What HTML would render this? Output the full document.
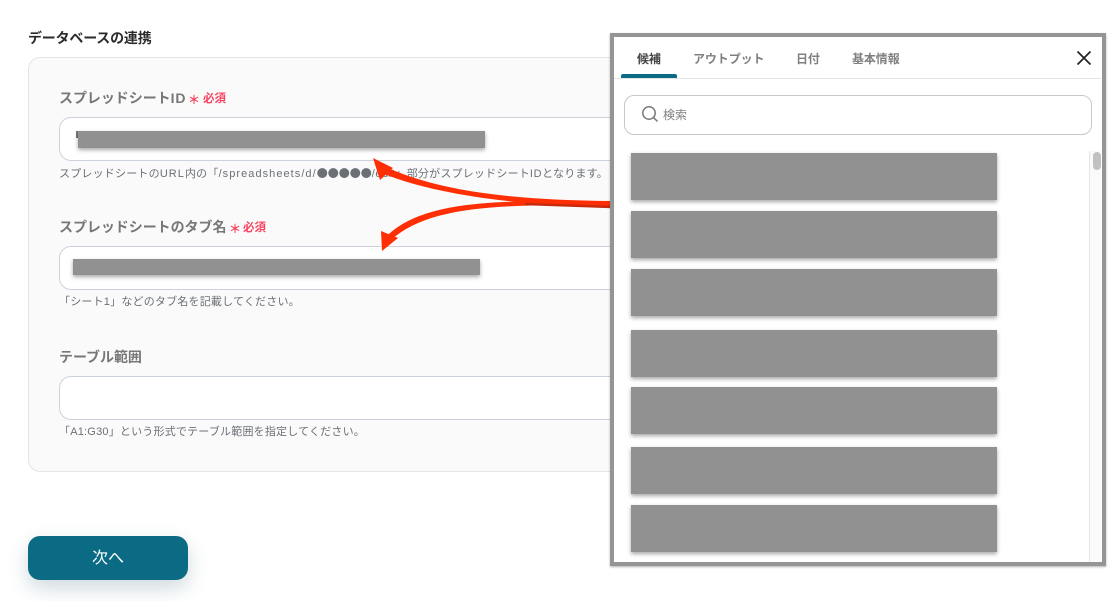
<!DOCTYPE html>
<html lang="ja">
<head>
<meta charset="utf-8">
<style>
html,body{margin:0;padding:0;background:#fff;}
body{width:1117px;height:601px;position:relative;overflow:hidden;font-family:"Liberation Sans","Noto Sans CJK JP",sans-serif;}
.a{position:absolute;white-space:nowrap;}
.card{position:absolute;left:28px;top:57px;width:640px;height:413px;background:#fafafa;border:1px solid #e3e5e8;border-radius:12px;}
.inp{position:absolute;left:59px;width:620px;height:42px;background:#fff;border:1px solid #ccd2dc;border-radius:12px;}
.lab{font-size:14px;font-weight:700;color:#777;line-height:20px;letter-spacing:-.05px;}
.req{font-size:11.5px;font-weight:700;color:#f6425f;line-height:16px;}
.ast{font-size:12px;font-weight:700;color:#f6425f;line-height:16px;font-family:"Noto Sans CJK JP",sans-serif;}
.hint{font-size:11px;color:#6b6f76;line-height:16px;letter-spacing:.2px;}
.l{letter-spacing:1.05px;}
.c{font-family:"Noto Sans CJK JP",sans-serif;letter-spacing:0;color:#6b6f76;}
.bar{position:absolute;background:#919191;box-shadow:0 2px 4px rgba(0,0,0,.35);}
.panel{position:absolute;left:610px;top:33px;width:488px;height:525px;background:#fff;border:4px solid #959595;box-shadow:0 1px 2px rgba(0,0,0,.3);}
.tab{font-size:12px;font-weight:700;color:#808080;line-height:16px;letter-spacing:-.1px;}
</style>
</head>
<body>
<div class="a" style="left:28px;top:29px;font-size:14px;font-weight:700;color:#2b2b2b;line-height:18px;letter-spacing:-.2px;">データベースの連携</div>
<div class="card"></div>

<div class="a lab" style="left:59px;top:88px;">スプレッドシート<span style="letter-spacing:.9px;">ID</span></div>
<div class="a ast" style="left:188px;top:92px;">＊</div>
<div class="a req" style="left:203px;top:91px;">必須</div>
<div class="inp" style="top:117px;"></div>
<div class="a" style="left:76px;top:131px;width:2px;height:7px;background:#777;"></div>
<div class="bar" style="left:78px;top:131px;width:407px;height:17px;"></div>
<div class="a hint" style="left:59px;top:165px;">スプレッドシートの<span class="l">URL</span>内の「<span class="l">/spreadsheets/d/</span><span class="c">●●●●●</span><span style="letter-spacing:.6px;">/edit</span>」部分がスプレッドシート<span style="letter-spacing:.6px;">ID</span>となります。</div>

<div class="a lab" style="left:59px;top:217px;">スプレッドシートのタブ名</div>
<div class="a ast" style="left:229px;top:221px;">＊</div>
<div class="a req" style="left:243px;top:220px;">必須</div>
<div class="inp" style="top:246px;"></div>
<div class="bar" style="left:73px;top:259px;width:407px;height:16px;"></div>
<div class="a hint" style="left:59px;top:294px;">「シート1」などのタブ名を記載してください。</div>

<div class="a lab" style="left:59px;top:347px;">テーブル範囲</div>
<div class="inp" style="top:376px;"></div>
<div class="a hint" style="left:59px;top:424px;">「A1:G30」という形式でテーブル範囲を指定してください。</div>

<div class="a" style="left:28px;top:536px;width:160px;height:44px;background:#0b6a84;border-radius:12px;box-shadow:0 8px 20px rgba(11,70,90,.2);color:#fff;font-size:16px;line-height:45px;text-align:center;">次へ</div>

<svg class="a" style="left:0;top:0;" width="1117" height="601" viewBox="0 0 1117 601">
  <path d="M612 201 C520 200 445 193 388 168 L384 174 C440 196 520 205 612 208 Z" fill="#fe2f05"/>
  <path d="M373 158 L393 168 L380 180 Z" fill="#fe2f05"/>
  <path d="M612 202 C510 200 425 198 387 236 L391 240 C430 204 510 204 612 206 Z" fill="#fe2f05"/>
  <path d="M382 251 L398 238 L381 231 Z" fill="#fe2f05"/>
  <path d="M612 207 C580 206 550 205 525 204" fill="none" stroke="#c92a0c" stroke-width="2.5"/>
</svg>

<div class="panel"></div>
<div class="a tab" style="left:637px;top:51px;color:#444;">候補</div>
<div class="a tab" style="left:693px;top:51px;">アウトプット</div>
<div class="a tab" style="left:796px;top:51px;">日付</div>
<div class="a tab" style="left:852px;top:51px;">基本情報</div>
<div class="a" style="left:621px;top:74px;width:56px;height:4px;background:#0b6a84;border-radius:2px 2px 0 0;"></div>
<div class="a" style="left:614px;top:78px;width:487px;height:1px;background:#e3e5e8;"></div>
<svg class="a" style="left:1076px;top:50px;" width="16" height="16" viewBox="0 0 16 16"><path d="M1.5 1.5 L14.5 14.5 M14.5 1.5 L1.5 14.5" stroke="#222" stroke-width="1.7" fill="none"/></svg>
<div class="a" style="left:624px;top:95px;width:466px;height:38px;border:1px solid #c8c8c8;border-radius:10px;background:#fff;"></div>
<svg class="a" style="left:641px;top:105px;" width="18" height="18" viewBox="0 0 18 18"><circle cx="8" cy="8" r="6.2" fill="none" stroke="#777" stroke-width="1.5"/><path d="M12.5 12.5 L16.5 16.5" stroke="#777" stroke-width="1.5" fill="none"/></svg>
<div class="a" style="left:663px;top:107px;font-size:12px;color:#808080;line-height:16px;">検索</div>

<div class="a" style="left:1089px;top:151px;width:12px;height:411px;background:#fafafa;border-left:1px solid #e6e6e6;box-sizing:border-box;"></div>
<div class="a" style="left:1093px;top:152px;width:8px;height:18px;background:#c1c1c1;border-radius:4px;"></div>

<div class="bar" style="left:631px;top:153px;width:366px;height:47px;"></div>
<div class="bar" style="left:631px;top:211px;width:366px;height:47px;"></div>
<div class="bar" style="left:631px;top:269px;width:366px;height:47px;"></div>
<div class="bar" style="left:631px;top:330px;width:366px;height:47px;"></div>
<div class="bar" style="left:631px;top:387px;width:366px;height:47px;"></div>
<div class="bar" style="left:631px;top:447px;width:366px;height:47px;"></div>
<div class="bar" style="left:631px;top:505px;width:366px;height:47px;"></div>
</body>
</html>
